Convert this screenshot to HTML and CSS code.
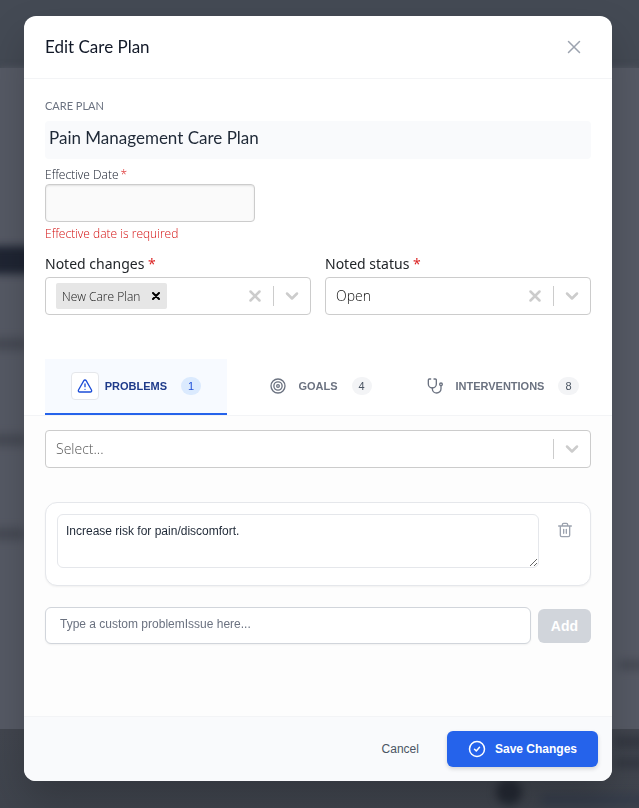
FILE: index.html
```
<!DOCTYPE html>
<html lang="en">
<head>
    <meta charset="UTF-8">
    <meta name="viewport" content="width=device-width, initial-scale=1.0">
    <title>Edit Care Plan</title>
    <link rel="stylesheet" href="styles.css">
</head>
<body>
    <div class="backdrop" aria-hidden="true">
        <div class="backdrop-top"></div>
        <div class="backdrop-page"></div>
        <div class="backdrop-bottom"></div>
        <span class="smudge bar"></span>
        <span class="smudge s1"></span>
        <span class="smudge s2"></span>
        <span class="smudge s3"></span>
        <span class="smudge s4"></span>
        <span class="smudge s5"></span>
        <span class="smudge s6"></span>
        <span class="smudge s7"></span>
        <span class="smudge dot"></span>
    </div>

    <form class="modal" role="dialog" aria-labelledby="modal-title">
        <header class="modal-header">
            <h1 id="modal-title">Edit Care Plan</h1>
            <button type="button" class="close-button" aria-label="Close">
                <svg width="14" height="14" viewBox="0 0 14 14"><path d="M1.5 1.5l11 11M12.5 1.5l-11 11"/></svg>
            </button>
        </header>

        <section class="details">
            <h2 class="eyebrow">CARE PLAN</h2>
            <p class="plan-name">Pain Management Care Plan</p>

            <div class="date-field">
                <label for="effective-date">Effective Date<span class="required">*</span></label>
                <input type="text" id="effective-date">
                <p class="error">Effective date is required</p>
            </div>

            <div class="field-row">
                <div class="field">
                    <label for="noted-changes">Noted changes <span class="required">*</span></label>
                    <div class="picker">
                        <span class="chip">New Care Plan
                            <button type="button" aria-label="Remove New Care Plan">
                                <svg width="8" height="8" viewBox="0 0 8 8"><path d="M1 1l6 6M7 1l-6 6"/></svg>
                            </button>
                        </span>
                        <input type="text" id="noted-changes">
                        <button type="button" class="clear" aria-label="Clear">
                            <svg width="12" height="12" viewBox="0 0 12 12"><path d="M1.5 1.5l9 9M10.5 1.5l-9 9"/></svg>
                        </button>
                        <span class="arrow"><svg width="14" height="10" viewBox="0 0 14 10"><path d="M2 2.5l5 5 5-5"/></svg></span>
                    </div>
                </div>
                <div class="field">
                    <label for="noted-status">Noted status <span class="required">*</span></label>
                    <div class="picker">
                        <select id="noted-status">
                            <option>Open</option>
                        </select>
                        <button type="button" class="clear" aria-label="Clear">
                            <svg width="12" height="12" viewBox="0 0 12 12"><path d="M1.5 1.5l9 9M10.5 1.5l-9 9"/></svg>
                        </button>
                        <span class="arrow"><svg width="14" height="10" viewBox="0 0 14 10"><path d="M2 2.5l5 5 5-5"/></svg></span>
                    </div>
                </div>
            </div>
        </section>

        <nav class="tabs">
            <button type="button" class="tab active">
                <span class="tab-icon">
                    <svg width="16" height="16" viewBox="0 0 24 24"><path d="M21.73 18l-8-14a2 2 0 0 0-3.48 0l-8 14A2 2 0 0 0 4 21h16a2 2 0 0 0 1.73-3z"/><path d="M12 9v4M12 17h.01"/></svg>
                </span>
                PROBLEMS
                <span class="count">1</span>
            </button>
            <button type="button" class="tab">
                <span class="tab-icon">
                    <svg width="16" height="16" viewBox="0 0 24 24"><circle cx="12" cy="12" r="10.5"/><circle cx="12" cy="12" r="6.2"/><circle cx="12" cy="12" r="2"/></svg>
                </span>
                GOALS
                <span class="count">4</span>
            </button>
            <button type="button" class="tab">
                <span class="tab-icon">
                    <svg width="16" height="16" viewBox="0 0 24 24"><path d="M10.5 1.5h2a1.5 1.5 0 0 1 1.5 1.5v6a6 6 0 0 1-12 0V3a1.500 1.500 0 0 1 1.500-1.500h2"/><path d="M8 15v1a6.500 6.500 0 0 0 13 0v-4"/><circle cx="21" cy="9.500" r="2"/></svg>
                </span>
                INTERVENTIONS
                <span class="count">8</span>
            </button>
        </nav>

        <section class="panel">
            <div class="picker">
                <select class="placeholder" aria-label="Problem">
                    <option>Select...</option>
                </select>
                <span class="arrow"><svg width="14" height="10" viewBox="0 0 14 10"><path d="M2 2.5l5 5 5-5"/></svg></span>
            </div>

            <div class="card">
                <textarea aria-label="Problem description">Increase risk for pain/discomfort.</textarea>
                <button type="button" class="delete-button" aria-label="Delete">
                    <svg width="16" height="16" viewBox="0 0 24 24"><path d="M2.5 6h19M19 6v14a2 2 0 0 1-2 2H7a2 2 0 0 1-2-2V6M8 6V4a2 2 0 0 1 2-2h4a2 2 0 0 1 2 2v2M10 11v6M14 11v6"/></svg>
                </button>
            </div>

            <div class="add-row">
                <input type="text" aria-label="Custom problem" placeholder="Type a custom problemIssue here...">
                <button type="button" disabled>Add</button>
            </div>
        </section>

        <footer class="modal-footer">
            <button type="button" class="cancel-button">Cancel</button>
            <button type="submit" class="save-button">
                <svg width="18" height="18" viewBox="0 0 18 18"><circle cx="9" cy="9" r="7.5"/><path d="M6.5 9.2l1.8 1.7 3.2-3.6"/></svg>
                Save Changes
            </button>
        </footer>
    </form>
</body>
</html>
```

FILE: styles.css
```
* {
    box-sizing: border-box;
}
body {
    margin: 0;
    min-height: 100vh;
    padding: 16px 27px 27px 24px;
    display: flex;
    font-family: Lato, sans-serif;
    color: #111827;
    background-color: #444852;
}
h1, h2, p {
    margin: 0;
    font-weight: 400;
}
button, input, select, textarea {
    font-family: "Liberation Sans", Arial, sans-serif;
    font-size: 12px;
    margin: 0;
}
button {
    border: none;
    background: none;
    padding: 0;
    cursor: pointer;
}
svg {
    display: block;
    flex: none;
    fill: none;
    stroke: currentColor;
    stroke-width: 2;
    stroke-linecap: round;
    stroke-linejoin: round;
}

/* dimmed page behind the dialog */
.backdrop {
    position: fixed;
    inset: 0;
    overflow: hidden;
    display: flex;
    flex-direction: column;
}
.backdrop-top {
    height: 68px;
    background-color: #444a54;
}
.backdrop-page {
    flex: 1;
    background-color: #565a65;
    box-shadow: 0 0 6px #565a65;
}
.backdrop-bottom {
    height: 79px;
    background: linear-gradient(#42464f, #3f444d);
}
.smudge {
    position: absolute;
    background-color: #3f434d;
    filter: blur(4px);
    opacity: 0.7;
}
.bar {
    left: -10px;
    top: 246px;
    width: 50px;
    height: 28px;
    background-color: #1f2533;
    opacity: 1;
}
.s1 {
    left: -10px;
    top: 338px;
    width: 36px;
    height: 12px;
}
.s2 {
    left: -10px;
    top: 434px;
    width: 36px;
    height: 12px;
}
.s3 {
    left: -10px;
    top: 528px;
    width: 34px;
    height: 12px;
}
.s4 {
    right: -6px;
    top: 660px;
    width: 26px;
    height: 10px;
}
.s5 {
    right: -6px;
    top: 736px;
    width: 30px;
    height: 12px;
    background-color: #2f333d;
}
.s6 {
    right: -6px;
    top: 758px;
    width: 30px;
    height: 10px;
    background-color: #2f333d;
}
.s7 {
    right: -6px;
    top: 794px;
    width: 104px;
    height: 12px;
    background-color: #323a4a;
}
.dot {
    right: 117px;
    bottom: 3px;
    width: 26px;
    height: 26px;
    border-radius: 50%;
    background-color: #242933;
    opacity: 1;
}

.modal {
    position: relative;
    flex: 1;
    min-width: 0;
    display: flex;
    flex-direction: column;
    background-color: #fff;
    border-radius: 12px;
    overflow: hidden;
    box-shadow: 0 20px 40px rgba(0, 0, 0, 0.2);
}
.modal-header {
    display: flex;
    align-items: center;
    justify-content: space-between;
    height: 63px;
    padding: 0 31px 0 21px;
    border-bottom: 1px solid #f3f4f6;
}
.modal-header h1 {
    font-size: 17px;
    line-height: 24px;
}
.close-button {
    color: #9ca3af;
}
.close-button svg {
    stroke-width: 1.5;
}

.details {
    padding: 19px 21px 44px;
}
.eyebrow {
    font-size: 11px;
    line-height: 16px;
    color: #6b7280;
}
.plan-name {
    margin-top: 7px;
    padding: 5px 4px 9px;
    font-size: 17px;
    line-height: 24px;
    color: #1f2937;
    background-color: #f9fafc;
    border-radius: 4px;
}
.required {
    color: #dc2626;
}
.date-field {
    margin-top: 8px;
}
.date-field label {
    display: block;
    font-family: "Open Sans", sans-serif;
    font-size: 12px;
    font-weight: 300;
    line-height: 16px;
    color: #111827;
}
.date-field .required {
    margin-left: 2px;
}
.date-field input {
    display: block;
    width: 210px;
    height: 38px;
    margin-top: 1px;
    padding: 0 10px;
    border: 1px solid #ccc;
    border-radius: 4px;
    background-color: #fafafa;
    box-shadow: inset 0 1px 2px rgba(0, 0, 0, 0.1);
}
.error {
    margin-top: 4px;
    font-family: "Open Sans", sans-serif;
    font-size: 12px;
    font-weight: 300;
    line-height: 16px;
    color: #d30f0f;
}
.field-row {
    display: grid;
    grid-template-columns: repeat(2, minmax(0, 1fr));
    gap: 14px;
    margin-top: 12px;
}
.field label {
    display: block;
    font-family: "Noto Sans", sans-serif;
    font-size: 14px;
    line-height: 20px;
    color: #212529;
}
.field .picker {
    margin-top: 3px;
}

.picker {
    display: flex;
    align-items: center;
    height: 38px;
    padding-left: 10px;
    border: 1px solid #ccc;
    border-radius: 4px;
    background-color: #fff;
}
.picker input, .picker select {
    flex: 1;
    min-width: 0;
    height: 22px;
    padding: 0 0 2px;
    border: none;
    background: none;
    appearance: none;
    font-family: "Open Sans", sans-serif;
    font-size: 14px;
    font-weight: 300;
    color: #111;
}
.picker .placeholder {
    color: #555;
}
.clear {
    margin-right: 12px;
    color: #ccc;
}
.clear svg, .arrow svg {
    stroke-width: 2.5;
}
.arrow {
    padding: 5px 11px;
    border-left: 1px solid #ccc;
    color: #ccc;
}
.chip {
    display: flex;
    align-items: center;
    gap: 12px;
    height: 26px;
    padding: 0 7px 0 6px;
    font-family: "Open Sans", sans-serif;
    font-size: 12px;
    font-weight: 300;
    color: #111;
    background-color: #e6e6e6;
    border-radius: 2px;
}

.tabs {
    display: grid;
    grid-template-columns: repeat(3, 1fr);
    padding: 0 21px;
    border-bottom: 1px solid #f3f4f6;
}
.tab {
    display: flex;
    align-items: center;
    justify-content: center;
    gap: 6px;
    height: 56px;
    font-size: 11px;
    font-weight: 700;
    color: #6b7280;
    border-bottom: 2px solid transparent;
}
.tab-icon {
    padding: 5px;
    border: 1px solid transparent;
    border-radius: 4px;
}
.count {
    margin-left: 8px;
    padding: 0 7px;
    line-height: 18px;
    font-weight: 400;
    color: #4b5563;
    background-color: #f3f4f6;
    border-radius: 9px;
}
.tab.active {
    color: #1e3a8a;
    background-color: #f7faff;
    border-bottom-color: #2563eb;
}
.active .tab-icon {
    color: #1d4ed8;
    background-color: #fff;
    border-color: #e5e7eb;
}
.active .count {
    color: #1d4ed8;
    background-color: #dbeafe;
}

.panel {
    flex: 1;
    padding: 14px 21px 20px;
    background-color: #fdfdfd;
}
.card {
    display: flex;
    align-items: flex-start;
    gap: 18px;
    margin-top: 34px;
    padding: 11px 17px 17px 11px;
    background-color: #fff;
    border: 1px solid #e5e7eb;
    border-radius: 12px;
    box-shadow: 0 1px 2px rgba(0, 0, 0, 0.05);
}
.card textarea {
    flex: 1;
    min-width: 0;
    height: 54px;
    padding: 8px;
    line-height: 16px;
    color: #1f2937;
    border: 1px solid #e5e7eb;
    border-radius: 6px;
    resize: vertical;
}
.delete-button {
    margin-top: 8px;
    color: #9ca3af;
}
.add-row {
    display: flex;
    align-items: center;
    gap: 7px;
    margin-top: 21px;
}
.add-row input {
    flex: 1;
    min-width: 0;
    height: 37px;
    padding: 0 14px 4px;
    background-color: #fff;
    border: 1px solid #d1d5db;
    border-radius: 6px;
    box-shadow: 0 1px 2px rgba(0, 0, 0, 0.05);
}
.add-row input::placeholder {
    color: #6b7280;
}
.add-row button {
    height: 34px;
    padding: 0 13px;
    font-size: 14px;
    font-weight: 700;
    color: #fff;
    background-color: #d1d5db;
    border-radius: 6px;
}

.modal-footer {
    display: flex;
    align-items: center;
    justify-content: flex-end;
    gap: 28px;
    padding: 14px;
    background-color: #f9fafc;
    border-top: 1px solid #f3f4f6;
}
.cancel-button {
    color: #4b5563;
}
.save-button {
    display: flex;
    align-items: center;
    gap: 9px;
    height: 36px;
    padding: 0 21px;
    font-weight: 700;
    color: #fff;
    background-color: #2563eb;
    border-radius: 6px;
    box-shadow: 0 2px 4px rgba(0, 0, 0, 0.15);
}
.save-button svg {
    stroke-width: 1.5;
}
```
